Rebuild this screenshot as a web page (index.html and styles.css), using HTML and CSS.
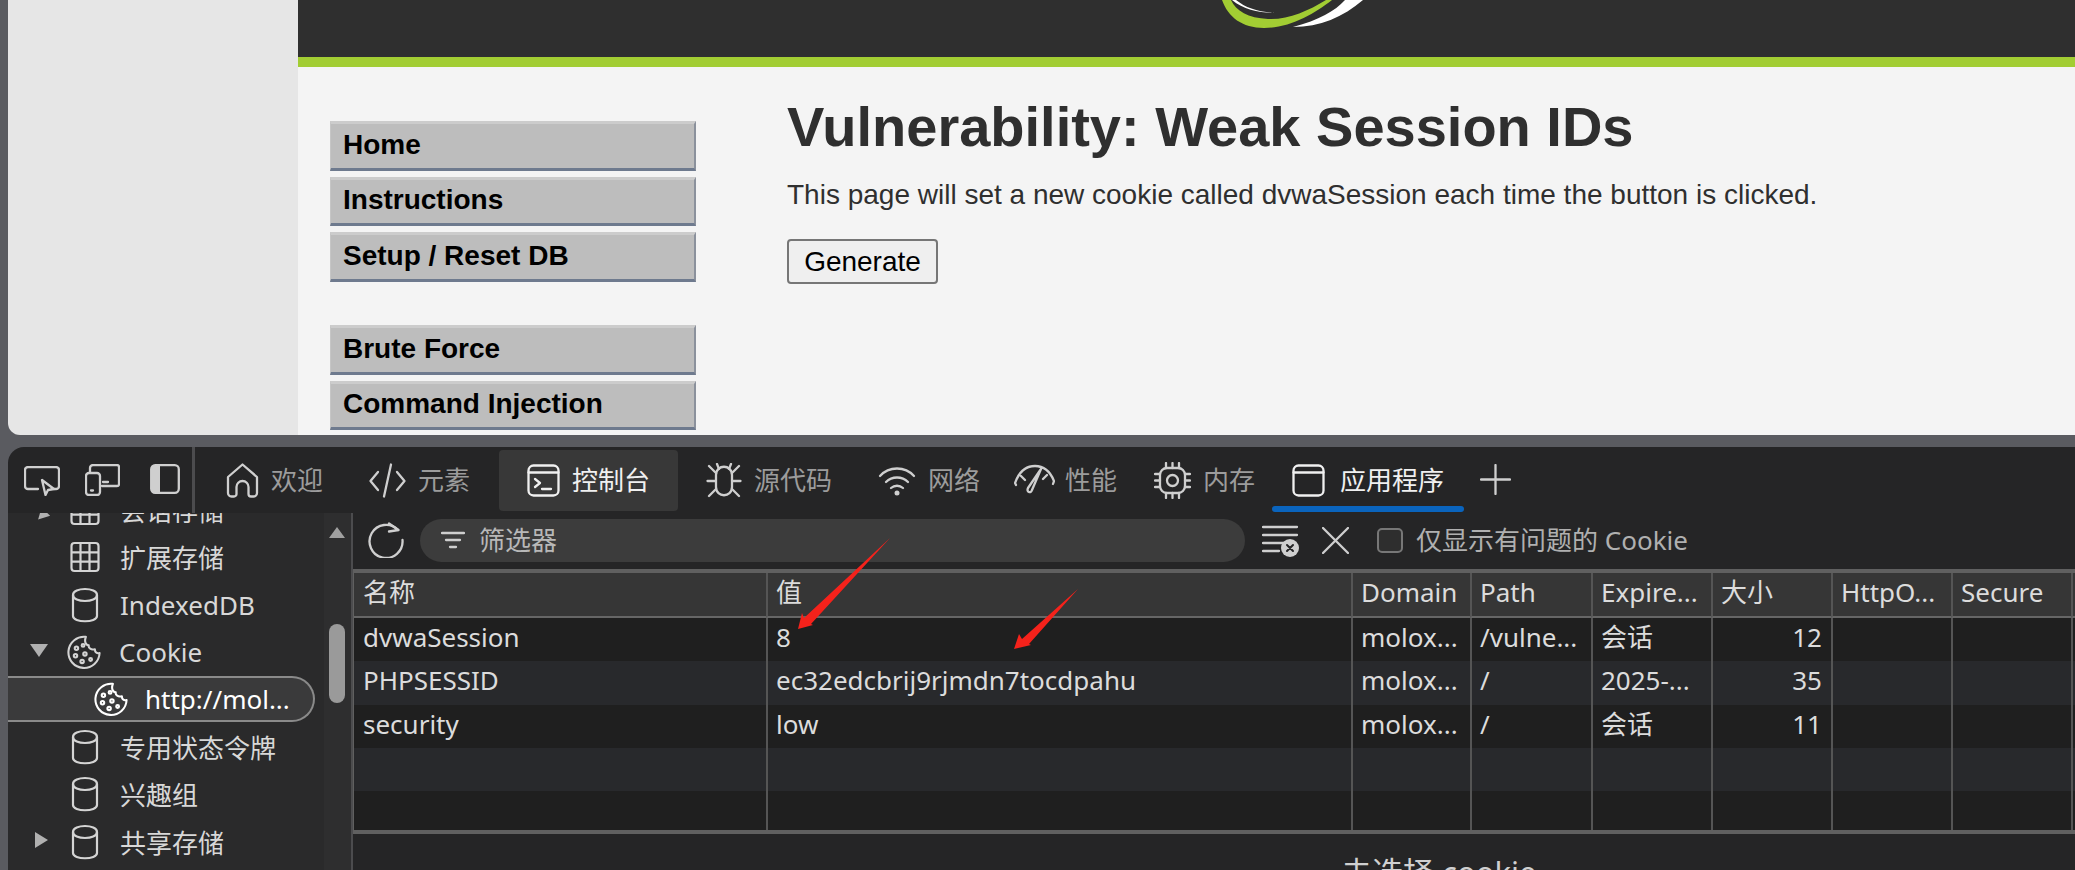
FILE: index.html
```html
<!DOCTYPE html>
<html lang="en">
<head>
  <meta charset="UTF-8" />
  <meta name="viewport" content="width=device-width, initial-scale=1.0"/>
  <title>Vulnerability: Weak Session IDs</title>
  <link rel="stylesheet" href="styles.css">
</head>
<body>
  <svg class="defs" width="0" height="0">
    <symbol id="i-grid" viewBox="0 0 30 40"><rect x="1.5" y="6" width="27" height="28" rx="3"/><path d="M1.5 15.3h27M1.5 24.6h27M10.5 6v28M19.5 6v28"/></symbol>
    <symbol id="i-db" viewBox="0 0 30 40"><path d="M3 10v21c0 7 24 7 24 0V10"/><path d="M3 10c0-8 24-8 24 0s-24 8-24 0z"/></symbol>
    <symbol id="i-cookie" viewBox="0 0 36 36"><path d="M20 2a16.5 16.5 0 1 0 14.500 17c-3 1-5-1-5-4-4 1-7-1-6.500-4-3 0-5-4-3-9z"/><g class="dots"><circle cx="10" cy="14" r="1.800"/><circle cx="17" cy="11" r="1.500"/><circle cx="9" cy="22" r="1.800"/><circle cx="19" cy="20" r="1.800"/><circle cx="16" cy="28" r="1.800"/><circle cx="25" cy="26" r="1.500"/></g></symbol>
  </svg>

  <div class="page">
    <div class="page-side"></div>
    <div class="page-main">
      <div class="dvwa-header">
        <svg class="dvwa-logo" width="142" height="28" viewBox="0 0 142 28">
          <path class="logo-green" d="M0 0C6 17 20 28 42 28 68 28 92 14 110 0h-6C86 11 66 20 46 19 26 18 14 11 9 0z"/>
          <path class="logo-white" d="M14 0c10 8 22 12 40 13-16 0-32-3-44-13z"/>
          <path class="logo-white" d="M71 27c27 0 50-10 70-27h-18c-10 11-26 20-52 27z"/>
        </svg>
      </div>
      <div class="dvwa-body">
        <div class="dvwa-menu">
          <div class="menu-group">
            <a class="menu-item">Home</a>
            <a class="menu-item">Instructions</a>
            <a class="menu-item">Setup / Reset DB</a>
          </div>
          <div class="menu-group">
            <a class="menu-item">Brute Force</a>
            <a class="menu-item">Command Injection</a>
          </div>
        </div>
        <div class="dvwa-content">
          <h1>Vulnerability: Weak Session IDs</h1>
          <p>This page will set a new cookie called dvwaSession each time the button is clicked.</p>
          <button class="generate">Generate</button>
        </div>
      </div>
    </div>
  </div>

  <div class="devtools">
    <div class="dt-toolbar">
      <div class="dt-tools">
        <svg class="ico ico-inspect" viewBox="0 0 36 30"><path d="M14 23H4a3 3 0 0 1-3-3V4a3 3 0 0 1 3-3h28a3 3 0 0 1 3 3v16a3 3 0 0 1-3 3h-2"/><path d="M18 14l12 9-6 1-2.500 5z"/></svg>
        <svg class="ico ico-device" viewBox="0 0 35 32"><path d="M5 8V4a3 3 0 0 1 3-3h24a2 2 0 0 1 2 2v17a2 2 0 0 1-2 2H17"/><rect x="1" y="9" width="14" height="22" rx="3"/><path d="M6 26.500h2M18 18h5"/></svg>
        <svg class="ico ico-panel" viewBox="0 0 30 30"><rect x="1.200" y="1.200" width="27.600" height="27.600" rx="4"/><path class="fill" d="M5 1.200h5v27.600H5a4 4 0 0 1-4-4V5a4 4 0 0 1 4-3.800z"/></svg>
      </div>
      <div class="dt-tabs">
        <div class="tab tab-first">
          <svg class="ico ico-home" viewBox="0 0 33 35"><path d="M2 14L16.500 1.500 31 14v16a3.500 3.500 0 0 1-3.500 3.500H25a2.500 2.500 0 0 1-2.500-2.500v-7a6 6 0 0 0-12 0v7A2.500 2.500 0 0 1 8 33.500H5.500A3.500 3.500 0 0 1 2 30z"/></svg>
          <span>欢迎</span>
        </div>
        <div class="tab">
          <svg class="ico ico-code" viewBox="0 0 37 35"><path d="M9 9L1.500 18 9 27M28 9l7.500 9-7.500 9M22 1.500L15 33.500"/></svg>
          <span>元素</span>
        </div>
        <div class="tab tab-active">
          <svg class="ico ico-app" viewBox="0 0 33 33"><rect x="1.500" y="1.500" width="30" height="30" rx="5"/><path d="M1.500 8.500h30M8 15l5 4-5 4M15 25h9"/></svg>
          <span>控制台</span>
        </div>
        <div class="tab tab-after">
          <svg class="ico ico-bug" viewBox="0 0 36 35"><path d="M10 12c0-11 16-11 16 0v12c0 11-16 11-16 0z"/><path d="M10 10L3 3M26 10l7-7M10 18H1.500M26 18h8.500M10 26l-7 7M26 26l7 7M13 6L11 1M23 6l2-5"/></svg>
          <span>源代码</span>
        </div>
        <div class="tab">
          <svg class="ico ico-wifi" viewBox="0 0 38 31"><path d="M2 11C11 1 27 1 36 11M8 17c6-6 16-6 22 0M13 23c3.500-3 8.500-3 12 0"/><circle class="fill" cx="19" cy="28" r="2.500"/></svg>
          <span>网络</span>
        </div>
        <div class="tab tab-perf">
          <svg class="ico ico-perf" viewBox="0 0 41 33"><path d="M2 21l-1-2C5 8 12 2 21 2s15 5 19 15l-1 3M7 12l4 4M33 11l-4 4M27 5L18 26c-1 4-6 2-4-2z"/></svg>
          <span>性能</span>
        </div>
        <div class="tab tab-tight">
          <svg class="ico ico-chip" viewBox="0 0 37 37"><rect x="6" y="6" width="25" height="25" rx="7"/><circle cx="18.500" cy="18.500" r="5.500"/><path d="M12 1v5M18.500 1v5M25 1v5M12 31v5M18.500 31v5M25 31v5M1 12h5M1 18.500h5M1 25h5M31 12h5M31 18.500h5M31 25h5"/></svg>
          <span>内存</span>
        </div>
        <div class="tab tab-tight tab-current">
          <svg class="ico ico-app" viewBox="0 0 33 33"><rect x="1.500" y="1.500" width="30" height="30" rx="5"/><path d="M1.500 8.500h30"/></svg>
          <span>应用程序</span>
        </div>
        <svg class="ico ico-plus" viewBox="0 0 31 31"><path d="M15.500 1v29M1 15.500h29"/></svg>
      </div>
    </div>

    <div class="dt-body">
      <div class="tree">
        <div class="tree-list">
          <div class="tree-row"><i class="arrow arrow-down arrow-small"></i><svg class="node-ico"><use href="#i-grid"/></svg><span>会话存储</span></div>
          <div class="tree-row"><svg class="node-ico"><use href="#i-grid"/></svg><span>扩展存储</span></div>
          <div class="tree-row"><svg class="node-ico"><use href="#i-db"/></svg><span>IndexedDB</span></div>
          <div class="tree-row"><i class="arrow arrow-down"></i><svg class="node-ico node-cookie"><use href="#i-cookie"/></svg><span>Cookie</span></div>
          <div class="tree-row tree-selected"><svg class="node-ico node-cookie"><use href="#i-cookie"/></svg><span>http://mol...</span></div>
          <div class="tree-row"><svg class="node-ico"><use href="#i-db"/></svg><span>专用状态令牌</span></div>
          <div class="tree-row"><svg class="node-ico"><use href="#i-db"/></svg><span>兴趣组</span></div>
          <div class="tree-row"><i class="arrow arrow-right"></i><svg class="node-ico"><use href="#i-db"/></svg><span>共享存储</span></div>
        </div>
        <div class="scrollbar">
          <i class="scroll-up"></i>
          <i class="scroll-thumb"></i>
        </div>
      </div>

      <div class="cookies">
        <div class="filter-bar">
          <svg class="ico ico-refresh" viewBox="0 0 36 36"><path d="M30 8A16.500 16.500 0 1 0 34.500 18"/><path d="M21 1.500l9.500 6.500-9.500 1.500"/></svg>
          <div class="filter-input">
            <svg class="ico ico-filter" viewBox="0 0 24 18"><path d="M1 2h22M5 9h14M9 16h6"/></svg>
            <span>筛选器</span>
          </div>
          <svg class="ico ico-clear" viewBox="0 0 37 32"><path d="M1 2h34M1 10h34M1 18h22M1 26h16"/><circle class="fill" cx="28" cy="23" r="9"/><path class="mark" d="M25 20l6 6M31 20l-6 6"/></svg>
          <svg class="ico ico-close" viewBox="0 0 27 27"><path d="M1 1l25 25M26 1L1 26"/></svg>
          <label class="only-issues"><i class="check"></i><span>仅显示有问题的 Cookie</span></label>
        </div>

        <div class="table-wrap">
          <table class="cookie-table">
            <colgroup>
              <col class="c-name"><col class="c-value"><col class="c-domain"><col class="c-path">
              <col class="c-std"><col class="c-std"><col class="c-std"><col class="c-std"><col class="c-std">
            </colgroup>
            <thead>
              <tr><th>名称</th><th>值</th><th>Domain</th><th>Path</th><th>Expire...</th><th>大小</th><th>HttpO...</th><th>Secure</th><th></th></tr>
            </thead>
            <tbody>
              <tr><td>dvwaSession</td><td>8</td><td>molox...</td><td>/vulne...</td><td>会话</td><td class="num">12</td><td></td><td></td><td></td></tr>
              <tr><td>PHPSESSID</td><td>ec32edcbrij9rjmdn7tocdpahu</td><td>molox...</td><td>/</td><td>2025-...</td><td class="num">35</td><td></td><td></td><td></td></tr>
              <tr><td>security</td><td>low</td><td>molox...</td><td>/</td><td>会话</td><td class="num">11</td><td></td><td></td><td></td></tr>
              <tr><td></td><td></td><td></td><td></td><td></td><td></td><td></td><td></td><td></td></tr>
              <tr class="row-last"><td></td><td></td><td></td><td></td><td></td><td></td><td></td><td></td><td></td></tr>
            </tbody>
          </table>
        </div>

        <div class="empty-state">未选择 cookie</div>
      </div>
    </div>
  </div>

  <!-- red arrows drawn over the screenshot -->
  <svg class="annotations" width="2075" height="870" viewBox="0 0 2075 870">
    <path d="M890 538L811 624 813 625 798 629 802 613 804 618z"/>
    <path d="M1078 589L1029 644 1031 645 1014 649 1019 634 1022 639z"/>
  </svg>
</body>
</html>
```

FILE: styles.css
```css
* {
  box-sizing: border-box;
}

html, body {
  margin: 0;
  padding: 0;
  height: 870px;
  overflow: hidden;
}

body {
  position: relative;
  width: 2075px;
  background-color: #5a5b60;
  font-family: "Noto Sans", "Noto Sans CJK SC", sans-serif;
}

.defs {
  position: absolute;
}

/* Browser page (DVWA) */
.page {
  display: flex;
  height: 435px;
  margin-left: 8px;
  border-bottom-left-radius: 12px;
  overflow: hidden;
  background-color: #e6e6e6;
  font-family: "Liberation Sans", Arial, sans-serif;
}

.page-side {
  width: 290px;
}

.page-main {
  flex: 1;
  background-color: #f4f4f4;
}

.dvwa-header {
  display: flex;
  height: 67px;
  padding-left: 924px;
  background-color: #2f2f2f;
  border-bottom: 10px solid #a2cd33;
}

.dvwa-logo {
  display: block;
}

.logo-green { fill: #a2cd33; }
.logo-white { fill: #ffffff; }

.dvwa-body {
  display: flex;
  padding-left: 32px;
}

.dvwa-menu {
  width: 366px;
  padding-top: 54px;
}

.menu-group {
  display: flex;
  flex-direction: column;
  gap: 6px;
  margin-bottom: 43.500px;
}

.menu-item {
  display: flex;
  align-items: center;
  height: 49.500px;
  padding: 0 0 2px 12px;
  background-color: #bdbdbd;
  border-top: 3px solid #cccccc;
  border-bottom: 3px solid #6e7a8e;
  border-right: 2px solid #8b919c;
  border-left: 1px solid #c6c6c6;
  color: #000000;
  font-size: 28px;
  font-weight: bold;
}

.dvwa-content {
  padding-left: 91px;
  color: #2f2f2f;
}

.dvwa-content h1 {
  margin: 28px 0 0;
  font-size: 56px;
  line-height: 64px;
  font-weight: bold;
}

.dvwa-content p {
  margin: 19px 0 0;
  font-size: 28px;
  line-height: 34px;
}

.generate {
  display: block;
  width: 151px;
  height: 45px;
  margin-top: 27px;
  padding: 0;
  background-color: #efefef;
  border: 2px solid #767676;
  border-radius: 4px;
  color: #000000;
  font-family: inherit;
  font-size: 28px;
}

/* DevTools */
.devtools {
  display: flex;
  flex-direction: column;
  height: 423px;
  margin: 12px 0 0 8px;
  border-top-left-radius: 16px;
  overflow: hidden;
  background-color: #252526;
  color: #d8d8d8;
  font-size: 26px;
}

.ico {
  display: block;
  flex: none;
  fill: none;
  stroke: #cfcfcf;
  stroke-width: 2.300;
  stroke-linecap: round;
  stroke-linejoin: round;
}

.ico .fill {
  fill: #cfcfcf;
  stroke: none;
}

.dt-toolbar {
  display: flex;
  flex: none;
  height: 66px;
}

.dt-tools {
  display: flex;
  align-items: center;
  gap: 25px;
  width: 187px;
  padding-left: 16px;
  border-right: 3px solid #4c4c4e;
}

.ico-inspect { width: 36px; height: 30px; margin-top: 2px; }
.ico-device { width: 35px; height: 32px; }
.ico-panel { width: 30px; height: 30px; margin-left: 5px; margin-top: -2px; }

.dt-tabs {
  display: flex;
  align-items: stretch;
}

.tab {
  position: relative;
  display: flex;
  align-items: center;
  gap: 12px;
  margin-left: 46px;
  color: #9c9c9c;
  white-space: nowrap;
}

.tab span {
  margin-top: -3px;
}

.tab-first { margin-left: 31px; }
.tab-tight { margin-left: 37px; }
.tab-after { margin-left: 28px; }
.tab-perf { margin-left: 34px; gap: 10px; }

.tab-active {
  height: 61px;
  margin: 3px 0 0 29px;
  padding: 0 28px;
  background-color: #383838;
  border-radius: 4px;
  color: #f0f0f0;
}

.tab-current {
  gap: 15px;
  color: #f0f0f0;
}

.tab-current .ico,
.tab-active .ico {
  stroke: #f0f0f0;
}

.tab-current::after {
  content: "";
  position: absolute;
  left: -20px;
  right: -20px;
  bottom: 1px;
  height: 6px;
  border-radius: 3px;
  background-color: #0a64bd;
}

.ico-home { width: 33px; height: 35px; }
.ico-code { width: 37px; height: 35px; }
.ico-app { width: 33px; height: 33px; }
.ico-bug { width: 36px; height: 35px; }
.ico-wifi { width: 38px; height: 31px; }
.ico-perf { width: 41px; height: 33px; }
.ico-chip { width: 37px; height: 37px; }
.ico-plus { width: 31px; height: 31px; margin: 17px 0 0 36px; }

.dt-body {
  display: flex;
  flex: 1;
  min-height: 0;
}

/* Storage tree */
.tree {
  display: flex;
  flex: none;
  width: 343px;
  overflow: hidden;
  background-color: #2a2a2b;
}

.tree-list {
  width: 324px;
  margin-top: -27px;
}

.tree-row {
  position: relative;
  display: flex;
  align-items: center;
  height: 47.500px;
  padding-left: 62px;
  gap: 20px;
  color: #d8d8d8;
  white-space: nowrap;
}

.node-ico {
  flex: none;
  width: 30px;
  height: 40px;
  fill: none;
  stroke: #d4d4d4;
  stroke-width: 2.200;
  stroke-linejoin: round;
}

.node-ico .dots,
.node-cookie .dots {
  fill: #d4d4d4;
  stroke: none;
}

.node-cookie {
  width: 34px;
  height: 34px;
  margin-left: -3px;
  margin-right: -2px;
}

.tree-selected {
  width: 307px;
  height: 46px;
  margin: 0;
  padding-left: 89px;
  gap: 19px;
  background-color: #3a3a3b;
  border: 2px solid #8a8a8a;
  border-left: none;
  border-radius: 0 23px 23px 0;
  color: #ffffff;
}

.tree-selected + .tree-row {
  margin-top: 1px;
}

.tree-selected .node-ico {
  stroke: #ffffff;
}

.arrow {
  position: absolute;
  width: 0;
  height: 0;
  border-style: solid;
  border-color: transparent;
}

.arrow-down {
  left: 22px;
  top: 15px;
  border-width: 13px 9px 0;
  border-top-color: #b0b0b0;
}

.arrow-small {
  left: 28px;
  top: 24px;
  border-width: 11px 6px 0;
  transform: rotate(45deg);
}

.arrow-right {
  left: 27px;
  top: 14px;
  border-width: 8px 0 8px 13px;
  border-left-color: #b0b0b0;
}

.scrollbar {
  position: relative;
  width: 27px;
  margin-left: -8px;
  background-color: #2e2e2f;
}

.scroll-up {
  position: absolute;
  left: 5px;
  top: 14px;
  width: 0;
  height: 0;
  border-style: solid;
  border-width: 0 8px 11px;
  border-color: transparent transparent #a0a0a0;
}

.scroll-thumb {
  position: absolute;
  left: 5px;
  top: 111px;
  width: 16px;
  height: 79px;
  border-radius: 8px;
  background-color: #9a9a9a;
}

/* Cookie pane */
.cookies {
  display: flex;
  flex: 1;
  flex-direction: column;
  min-width: 0;
  border-left: 2px solid #4c4c4e;
}

.filter-bar {
  display: flex;
  align-items: center;
  flex: none;
  height: 56px;
  padding: 0 0 2px 15px;
}

.ico-refresh { width: 36px; height: 36px; }

.filter-input {
  display: flex;
  align-items: center;
  gap: 14px;
  width: 825px;
  height: 43px;
  margin-left: 16px;
  padding-left: 21px;
  background-color: #3c3c3c;
  border-radius: 22px;
  color: #b8b8b8;
}

.filter-input span {
  margin-top: -2px;
}

.ico-filter { width: 24px; height: 18px; }
.ico-clear { width: 37px; height: 32px; margin-left: 17px; margin-top: 2px; }
.ico-clear .mark { stroke: #252526; stroke-width: 2; }
.ico-close { width: 27px; height: 27px; margin-left: 23px; }

.only-issues {
  display: flex;
  align-items: center;
  gap: 13px;
  margin-left: 28px;
  color: #b0b0b0;
  white-space: nowrap;
}

.only-issues span {
  margin-top: -3px;
}

.check {
  display: block;
  width: 26px;
  height: 25px;
  border: 2px solid #777777;
  border-radius: 5px;
  background-color: #2e2e2e;
}

.table-wrap {
  flex: none;
  height: 265px;
  overflow: hidden;
  border-top: 4px solid #606060;
  border-bottom: 4px solid #606060;
  border-left: 1px solid #606060;
}

.cookie-table {
  width: 1837px;
  table-layout: fixed;
  border-collapse: separate;
  border-spacing: 0;
}

.c-name { width: 412px; }
.c-value { width: 585px; }
.c-domain { width: 119px; }
.c-path { width: 121px; }
.c-std { width: 120px; }

.cookie-table th,
.cookie-table td {
  height: 43.250px;
  padding: 0 0 5px 8px;
  border-left: 2px solid #555555;
  font-weight: normal;
  line-height: 30px;
  text-align: left;
  white-space: nowrap;
  overflow: hidden;
  color: #dcdcdc;
}

.cookie-table th:first-child,
.cookie-table td:first-child {
  border-left: none;
  padding-left: 9px;
}

.cookie-table th {
  height: 45px;
  background-color: #363636;
  border-bottom: 2px solid #666666;
}

.cookie-table tbody tr:nth-child(odd) td {
  background-color: #1f1f1f;
}

.cookie-table tbody tr:nth-child(even) td {
  background-color: #28292c;
}

.cookie-table td.num {
  padding-right: 9px;
  text-align: right;
}

.cookie-table .row-last td {
  height: 39px;
}

.empty-state {
  padding: 18px 0 0 988px;
  color: #d0d0d0;
  font-size: 31px;
  line-height: 40px;
  white-space: nowrap;
}

/* Hand-drawn arrows */
.annotations {
  position: absolute;
  left: 0;
  top: 0;
  fill: #f5221b;
  pointer-events: none;
}
```
